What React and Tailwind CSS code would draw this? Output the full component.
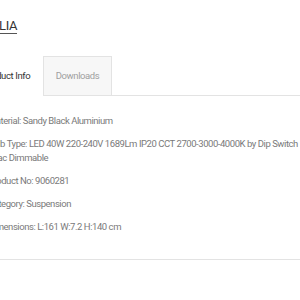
import React from 'react';

const specs = [
  'Material: Sandy Black Aluminium',
  'Bulb Type: LED 40W 220-240V 1689Lm IP20 CCT 2700-3000-4000K by Dip Switch Triac Dimmable',
  'Product No: 9060281',
  'Category: Suspension',
  'Dimensions: L:161 W:7.2 H:140 cm',
];

const App = () => {
  return (
    <div className="w-[300px] h-[300px] overflow-hidden bg-white font-[Roboto,sans-serif]">
      <div className="-ml-[30px] w-[336px]">
        {/* Title */}
        <h1 className="pt-[17px] -ml-[5px] text-[13px] leading-[18px] tracking-[-0.4px] text-[#333]">
          <span className="underline underline-offset-[3px] decoration-[#555]">CAMELIA</span>
        </h1>

        {/* Tabs */}
        <div className="mt-[21px] flex tracking-[-0.4px]">
          <div className="w-[73px] h-[40px] flex items-center justify-center text-[9.5px] text-[#333] bg-white">
            Product Info
          </div>
          <div className="w-[69px] h-[40px] flex items-center justify-center text-[9.5px] text-[#a0a0a0] bg-[#f7f7f7] border border-[#e3e3e3]">
            Downloads
          </div>
          <div className="flex-1 border-b border-[#e3e3e3]" />
        </div>

        {/* Specs */}
        <div className="pl-[18px] pr-[4px] pt-[18px] text-[9.5px] leading-[14px] tracking-[-0.45px] text-[#7a7a7a] flex flex-col gap-[9px]">
          {specs.map((s) => (
            <p key={s}>{s}</p>
          ))}
        </div>

        <div className="mt-[25px] border-b border-[#e3e3e3]" />
      </div>
    </div>
  );
};

export default App;
